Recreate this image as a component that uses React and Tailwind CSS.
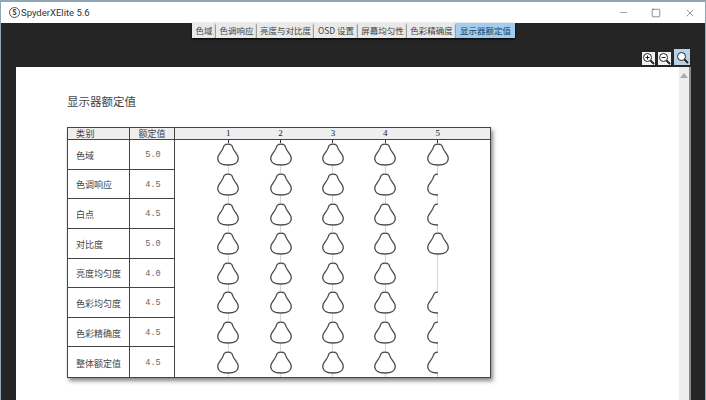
import React from 'react'
import { Minus, Square, X } from 'lucide-react'

const tabs = [
  { label: '色域', w: 'w-[24px]' },
  { label: '色调响应', w: 'w-[41px]' },
  { label: '亮度与对比度', w: 'w-[57px]' },
  { label: 'OSD 设置', w: 'w-[44px]' },
  { label: '屏幕均匀性', w: 'w-[49px]' },
  { label: '色彩精确度', w: 'w-[49px]' },
  { label: '显示器额定值', w: 'w-[59px]', active: true },
]

const rows = [
  { name: '色域', value: '5.0', score: 5 },
  { name: '色调响应', value: '4.5', score: 4.5 },
  { name: '白点', value: '4.5', score: 4.5 },
  { name: '对比度', value: '5.0', score: 5 },
  { name: '亮度均匀度', value: '4.0', score: 4 },
  { name: '色彩均匀度', value: '4.5', score: 4.5 },
  { name: '色彩精确度', value: '4.5', score: 4.5 },
  { name: '整体额定值', value: '4.5', score: 4.5 },
]

const shape = 'M8.5 1.5 Q11 .8 13.5 1.5 Q15 2 15.5 4 C16 7 19 9.5 20.5 12.5 C22 15.5 21 19 18.5 20.5 C16.5 21.8 14 22 11 22 C8 22 5.5 21.8 3.5 20.5 C1 19 0 15.5 1.5 12.5 C3 9.5 6 7 6.5 4 Q7 2 8.5 1.5 Z'

const Spider = ({ half }) => (
  <svg width={half ? 11 : 22} height="23" viewBox={half ? '0 0 11 23' : '0 0 22 23'} fill="none" className={half ? 'mr-[11px] shrink-0' : 'shrink-0'}>
    <path d={shape} fill="white" stroke="#4a4a4a" strokeWidth="1.3" />
  </svg>
)

const ZoomIcon = ({ mark, active }) => (
  <div className={active ? 'w-[16px] h-[16px] bg-[#b5d3e8] flex items-center justify-center' : 'w-[13px] h-[13px] bg-[#f2f2f2] flex items-center justify-center'}>
    <svg width="13" height="13" viewBox="0 0 13 13" fill="none" stroke="#222">
      <circle cx="5.5" cy="5.5" r="4" fill="white" strokeWidth="1" />
      <path d="M8.5 8.5L12 12" strokeWidth="1.8" />
      {mark && <path d="M3.5 5.5H7.5" strokeWidth="1" />}
      {mark === 'plus' && <path d="M5.5 3.5V7.5" strokeWidth="1" />}
    </svg>
  </div>
)

const App = () => {
  return (
    <div className="w-[706px] h-[400px] overflow-hidden flex flex-col bg-[#252525] border-t-2 border-x border-[#8fa6b5] font-['Noto_Sans_CJK_SC','Noto_Sans',sans-serif]">
      {/* Title bar */}
      <div className="h-[21px] shrink-0 bg-white flex items-center pl-[8px]">
        <div className="w-[11px] h-[11px] rounded-full border border-[#555] flex items-center justify-center text-[7px] leading-none font-bold text-[#333]">S</div>
        <span className="ml-[1px] text-[9.5px] leading-none text-[#333] font-['Roboto',sans-serif]">SpyderXElite 5.6</span>
        <div className="ml-auto flex items-center text-[#333]">
          <Minus size={11} strokeWidth={1} className="mr-[22px]" />
          <Square size={10} strokeWidth={1.3} className="mr-[23px]" />
          <X size={12} strokeWidth={1} className="mr-[9px]" />
        </div>
      </div>

      {/* Tabs */}
      <div className="h-[15px] shrink-0 flex pl-[191px]">
        {tabs.map((t) => (
          <div
            key={t.label}
            className={`${t.w} ${t.active ? 'bg-[#a3cdef] text-[#24415c]' : 'bg-[#e9e9e9] text-[#444]'} shrink-0 flex items-center justify-center text-[8.5px] leading-none whitespace-nowrap shadow-[0_1px_2px_#000]`}
          >
            {t.label}
          </div>
        ))}
      </div>

      {/* Zoom buttons */}
      <div className="h-[29px] shrink-0 flex items-end justify-end gap-[3px] pr-[15px] pb-[2px]">
        <ZoomIcon mark="plus" />
        <ZoomIcon mark="minus" />
        <ZoomIcon active />
      </div>

      {/* Report page */}
      <div className="flex-1 min-h-0 flex pl-[15px] pr-[14px]">
        <div className="flex-1 bg-white pl-[51px] pt-[26px]">
          <div className="text-[11.5px] leading-[16px] text-[#444]">显示器额定值</div>

          <div className="mt-[18px] w-[424px] border border-[#444] shadow-[2px_3px_4px_#888] bg-white text-[#444]">
            <div className="h-[12px] flex border-b border-[#444] bg-[#eeeeee] text-[9px] leading-none">
              <div className="w-[62px] border-r border-[#444] flex items-center pl-[8px] tracking-[0.5px]">类别</div>
              <div className="w-[45px] border-r border-[#444] flex items-center justify-center">额定值</div>
              <div className="flex-1 pl-[27px] grid grid-cols-[repeat(5,52.4px)]">
                {[1, 2, 3, 4, 5].map((n) => (
                  <div key={n} className="flex items-center justify-center text-[9px] text-[#222] font-['Liberation_Serif',serif]">{n}</div>
                ))}
              </div>
            </div>

            <div className="h-[237px] grid grid-rows-8">
              {rows.map((r, i) => (
                <div key={r.name} className="flex min-h-0">
                  <div className={`w-[62px] border-r border-[#444] flex items-center pl-[8px] pt-[2px] text-[9px] leading-none ${i < 7 ? 'border-b' : ''}`}>{r.name}</div>
                  <div className={`w-[45px] border-r border-[#444] flex items-center justify-center pl-[2px] pt-[2px] text-[8.5px] leading-none text-[#666] font-['Liberation_Mono',monospace] ${i < 7 ? 'border-b' : ''}`}>{r.value}</div>
                  <div className="flex-1 pl-[27px] grid grid-cols-[repeat(5,52.4px)]">
                    {[1, 2, 3, 4, 5].map((n) => (
                      <div key={n} className="flex flex-col items-center">
                        <div className={`flex-1 w-px ${i === 0 ? 'bg-[#333]' : 'bg-[#d4d4d4]'}`} />
                        {r.score >= n && <Spider />}
                        {r.score === n - 0.5 && <Spider half />}
                        <div className="flex-1 w-px bg-[#d4d4d4]" />
                      </div>
                    ))}
                  </div>
                </div>
              ))}
            </div>
          </div>
        </div>

        {/* Scrollbar */}
        <div className="w-[12px] bg-[#eeeeee] border-r-2 border-[#888] flex justify-center pt-[6px]">
          <div className="w-0 h-0 border-x-[4px] border-x-transparent border-b-[5px] border-b-[#aaa]" />
        </div>
      </div>
    </div>
  )
}

export default App
